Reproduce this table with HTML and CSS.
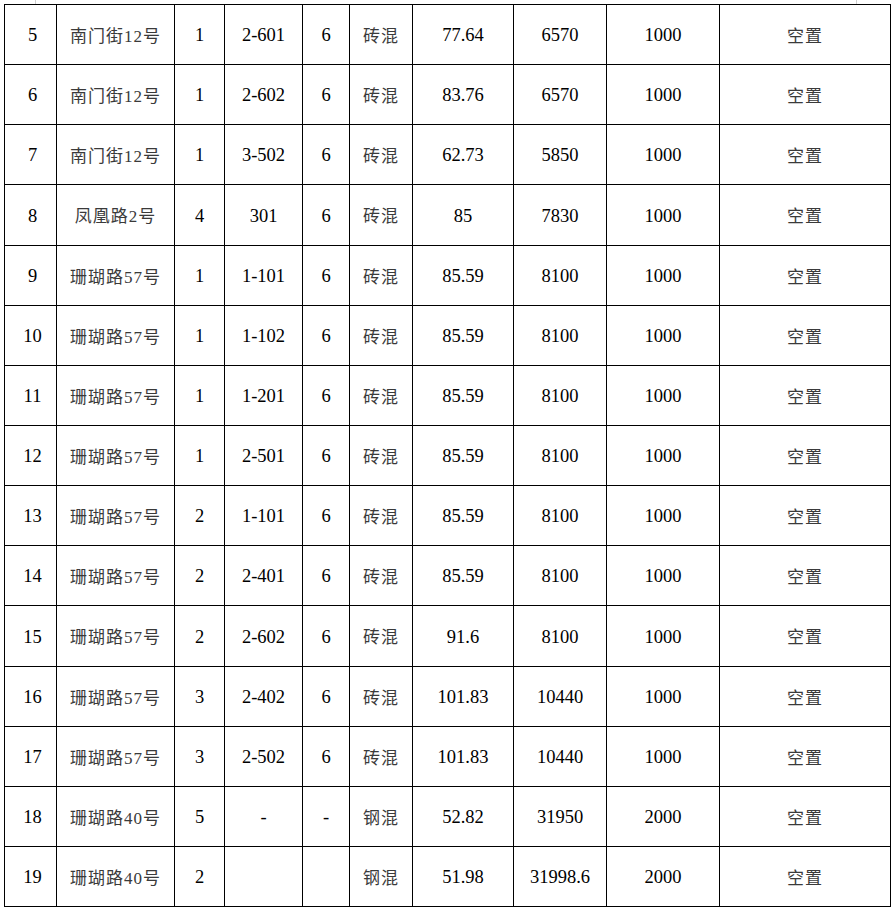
FILE: index.html
```html
<!DOCTYPE html>
<html lang="zh-CN">
<head>
<meta charset="utf-8">
<title>房源表</title>
<link rel="stylesheet" href="styles.css">
</head>
<body>
<div class="marks"><span class="mark m1"></span><span class="mark m2"></span></div>
<div class="grid">
  <div class="c n f">5</div><div class="c z">南门街12号</div><div class="c n">1</div><div class="c n">2-601</div><div class="c n">6</div><div class="c z">砖混</div><div class="c n">77.64</div><div class="c n">6570</div><div class="c n">1000</div><div class="c z">空置</div>
  <div class="c n f">6</div><div class="c z">南门街12号</div><div class="c n">1</div><div class="c n">2-602</div><div class="c n">6</div><div class="c z">砖混</div><div class="c n">83.76</div><div class="c n">6570</div><div class="c n">1000</div><div class="c z">空置</div>
  <div class="c n f">7</div><div class="c z">南门街12号</div><div class="c n">1</div><div class="c n">3-502</div><div class="c n">6</div><div class="c z">砖混</div><div class="c n">62.73</div><div class="c n">5850</div><div class="c n">1000</div><div class="c z">空置</div>
  <div class="c n f">8</div><div class="c z">凤凰路2号</div><div class="c n">4</div><div class="c n">301</div><div class="c n">6</div><div class="c z">砖混</div><div class="c n">85</div><div class="c n">7830</div><div class="c n">1000</div><div class="c z">空置</div>
  <div class="c n f">9</div><div class="c z">珊瑚路57号</div><div class="c n">1</div><div class="c n">1-101</div><div class="c n">6</div><div class="c z">砖混</div><div class="c n">85.59</div><div class="c n">8100</div><div class="c n">1000</div><div class="c z">空置</div>
  <div class="c n f">10</div><div class="c z">珊瑚路57号</div><div class="c n">1</div><div class="c n">1-102</div><div class="c n">6</div><div class="c z">砖混</div><div class="c n">85.59</div><div class="c n">8100</div><div class="c n">1000</div><div class="c z">空置</div>
  <div class="c n f">11</div><div class="c z">珊瑚路57号</div><div class="c n">1</div><div class="c n">1-201</div><div class="c n">6</div><div class="c z">砖混</div><div class="c n">85.59</div><div class="c n">8100</div><div class="c n">1000</div><div class="c z">空置</div>
  <div class="c n f">12</div><div class="c z">珊瑚路57号</div><div class="c n">1</div><div class="c n">2-501</div><div class="c n">6</div><div class="c z">砖混</div><div class="c n">85.59</div><div class="c n">8100</div><div class="c n">1000</div><div class="c z">空置</div>
  <div class="c n f">13</div><div class="c z">珊瑚路57号</div><div class="c n">2</div><div class="c n">1-101</div><div class="c n">6</div><div class="c z">砖混</div><div class="c n">85.59</div><div class="c n">8100</div><div class="c n">1000</div><div class="c z">空置</div>
  <div class="c n f">14</div><div class="c z">珊瑚路57号</div><div class="c n">2</div><div class="c n">2-401</div><div class="c n">6</div><div class="c z">砖混</div><div class="c n">85.59</div><div class="c n">8100</div><div class="c n">1000</div><div class="c z">空置</div>
  <div class="c n f">15</div><div class="c z">珊瑚路57号</div><div class="c n">2</div><div class="c n">2-602</div><div class="c n">6</div><div class="c z">砖混</div><div class="c n">91.6</div><div class="c n">8100</div><div class="c n">1000</div><div class="c z">空置</div>
  <div class="c n f">16</div><div class="c z">珊瑚路57号</div><div class="c n">3</div><div class="c n">2-402</div><div class="c n">6</div><div class="c z">砖混</div><div class="c n">101.83</div><div class="c n">10440</div><div class="c n">1000</div><div class="c z">空置</div>
  <div class="c n f">17</div><div class="c z">珊瑚路57号</div><div class="c n">3</div><div class="c n">2-502</div><div class="c n">6</div><div class="c z">砖混</div><div class="c n">101.83</div><div class="c n">10440</div><div class="c n">1000</div><div class="c z">空置</div>
  <div class="c n f">18</div><div class="c z">珊瑚路40号</div><div class="c n">5</div><div class="c n">-</div><div class="c n">-</div><div class="c z">钢混</div><div class="c n">52.82</div><div class="c n">31950</div><div class="c n">2000</div><div class="c z">空置</div>
  <div class="c n f">19</div><div class="c z">珊瑚路40号</div><div class="c n">2</div><div class="c n"></div><div class="c n"></div><div class="c z">钢混</div><div class="c n">51.98</div><div class="c n">31998.6</div><div class="c n">2000</div><div class="c z">空置</div>
</div>
</body>
</html>
```

FILE: styles.css
```css
html, body {
  margin: 0;
  padding: 0;
  background: #fff;
}

.marks {
  height: 4px;
  display: flex;
}

.mark {
  width: 1px;
  height: 4px;
  background: #cfcfcf;
}

.m1 { margin-left: 35px; }
.m2 { margin-left: 820px; }

.grid {
  margin-left: 4px;
  width: 887px;
  box-sizing: border-box;
  display: grid;
  grid-template-columns: 51px 117px 49px 77px 46px 62px 100px 92px 112px 170px;
  grid-template-rows: 59px 59px 59px 60px 59px 59px 59px 59px 59px 59px 60px 59px 59px 59px 59px;
  gap: 1px;
  padding: 1px;
  background: #000;
}

.c {
  background: #fff;
  display: flex;
  align-items: center;
  justify-content: center;
  box-sizing: border-box;
  color: #000;
  white-space: nowrap;
}

.f {
  padding-left: 4px;
}

.n {
  font-family: "Liberation Serif", "Noto Sans CJK SC", serif;
  font-size: 18.5px;
  padding-top: 2px;
}

.z {
  font-family: "Liberation Serif", "Noto Sans CJK SC", serif;
  font-size: 17px;
  color: #3a3a3a;
  letter-spacing: 1px;
  padding-bottom: 1px;
}
```
